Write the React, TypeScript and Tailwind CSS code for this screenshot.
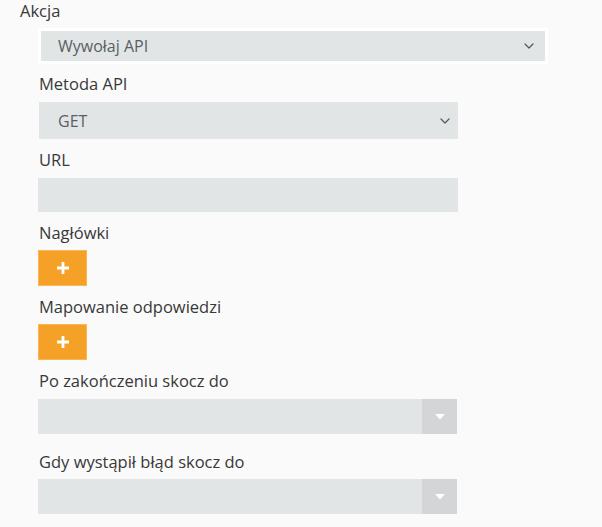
import { ChevronDown } from "lucide-react";

function Label({ text, className = "" }: { text: string; className?: string }) {
  return <div className={`leading-[20px] text-[16.5px] text-[#383838] ${className}`}>{text}</div>;
}

function PlusButton({ className = "" }: { className?: string }) {
  return (
    <button className={`w-[49px] h-[36px] bg-[#f5a128] border border-[#f8b655] flex items-center justify-center ${className}`}>
      <svg width="14" height="14" viewBox="0 0 14 14">
        <path d="M7 1v12M1 7h12" stroke="#fff" strokeWidth="2.8" />
      </svg>
    </button>
  );
}

function JumpSelect({ className = "" }: { className?: string }) {
  return (
    <div className={`w-[419px] h-[35px] bg-[#e2e5e6] flex justify-end ${className}`}>
      <div className="w-[35px] h-full bg-[#d4d5d6] flex items-center justify-center">
        <svg width="10" height="6" viewBox="0 0 10 6">
          <path d="M0 0h10L5 5.5z" fill="#fff" />
        </svg>
      </div>
    </div>
  );
}

export default function App() {
  return (
    <div className="w-[602px] h-[527px] bg-[#fafafa] font-['Open_Sans',sans-serif] overflow-hidden">
      <Label text="Akcja" className="pl-[20px] pt-[1px]" />

      {/* Akcja select */}
      <div className="ml-[38px] mt-[7px] w-[510px] h-[36px] border-[3px] border-white bg-[#e2e5e6] flex items-center justify-between pl-[17px] pr-[8px]">
        <span className="text-[16px] text-[#5a5f63]">Wywołaj API</span>
        <ChevronDown className="w-[16px] h-[16px] text-[#4b5a64]" strokeWidth={1.8} />
      </div>

      <div className="pl-[39px]">
        <Label text="Metoda API" className="mt-[10px]" />
        <div className="mt-[8px] w-[419px] h-[37px] bg-[#e2e5e6] flex items-center justify-between pl-[19px] pr-[5px]">
          <span className="text-[16px] text-[#5a5f63]">GET</span>
          <ChevronDown className="w-[16px] h-[16px] text-[#4b5a64]" strokeWidth={1.8} />
        </div>

        <Label text="URL" className="mt-[11px]" />
        <div className="mt-[8px] w-[420px] h-[34px] bg-[#e2e5e6] -ml-[1px]" />

        <Label text="Nagłówki" className="mt-[11px]" />
        <PlusButton className="mt-[7px] -ml-[1px]" />

        <Label text="Mapowanie odpowiedzi" className="mt-[11px]" />
        <PlusButton className="mt-[7px] -ml-[1px]" />

        <Label text="Po zakończeniu skocz do" className="mt-[11px]" />
        <JumpSelect className="mt-[8px] -ml-[1px]" />

        <Label text="Gdy wystąpił błąd skocz do" className="mt-[18px]" />
        <JumpSelect className="mt-[7px] -ml-[1px]" />
      </div>
    </div>
  );
}
